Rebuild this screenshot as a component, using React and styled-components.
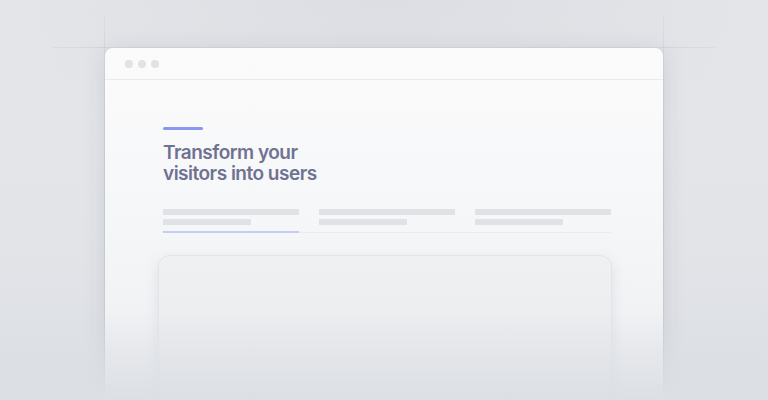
import React from 'react';
import styled, { createGlobalStyle } from 'styled-components';

const GlobalStyle = createGlobalStyle`
    html, body {
        margin: 0;
        padding: 0;
        background: #e2e4e9;
    }
    body {
        font-family: Inter, "Noto Sans", sans-serif;
    }
`;

const Stage = styled.div`
    position: relative;
    width: 768px;
    height: 400px;
    overflow: hidden;
    background: radial-gradient(ellipse 420px 160px at 384px 0px, #dcdee3 0%, rgba(220,222,227,0) 100%),
        linear-gradient(180deg, #e4e6ea 0%, #e2e4e8 60%, #dcdfe4 100%);
    padding-top: 48px;
    box-sizing: border-box;
`;

const GuideV = styled.div`
    position: absolute;
    top: 17px;
    bottom: 0;
    left: ${p => p.x}px;
    width: 1px;
    background: linear-gradient(180deg, rgba(190,193,200,0.2) 0%, rgba(190,193,200,0.9) 40%, rgba(190,193,200,0.6) 100%);
`;

const GuideH = styled.div`
    position: absolute;
    top: 47px;
    left: 52px;
    width: 664px;
    height: 1px;
    background: linear-gradient(90deg, rgba(200,203,209,0.3) 0%, #d0d2d8 12%, #d0d2d8 88%, rgba(200,203,209,0.3) 100%);
`;

const Window = styled.div`
    position: relative;
    margin-left: 105px;
    width: 558px;
    height: 400px;
    border-radius: 8px 8px 0 0;
    background: linear-gradient(180deg, #fbfbfc 0%, #f6f7f8 40%, #eceef1 90%);
    box-shadow: 0 0 0 1px rgba(210,212,218,0.5), 0 4px 22px rgba(120,125,140,0.22);
`;

const TitleBar = styled.div`
    display: flex;
    align-items: center;
    gap: 5px;
    height: 31px;
    padding-left: 20px;
    border-bottom: 1px solid #eaebee;
`;

const Dot = styled.span`
    width: 8px;
    height: 8px;
    border-radius: 50%;
    background: #e1e2e6;
`;

const Content = styled.div`
    padding: 47px 52px 0 58px;
`;

const Accent = styled.div`
    width: 40px;
    height: 3px;
    border-radius: 2px;
    background: #8a96ef;
`;

const Title = styled.h1`
    margin: 12px 0 0;
    font-size: 19px;
    line-height: 21px;
    font-weight: 600;
    letter-spacing: -0.5px;
    color: #707292;
`;

const TitleLine = styled.span`
    display: block;
`;

const Tabs = styled.div`
    display: grid;
    grid-template-columns: repeat(3, 136px);
    column-gap: 20px;
    margin-top: 25px;
    border-bottom: 1px solid #eaebee;
    width: 448px;
`;

const Tab = styled.div`
    display: flex;
    flex-direction: column;
    gap: 4px;
    padding-bottom: 6px;
    margin-bottom: -1px;
    border-bottom: 2px solid ${p => (p.active ? '#c6ccf3' : 'transparent')};
`;

const Line = styled.div`
    height: 6px;
    width: ${p => p.w}px;
    background: #e1e2e6;
`;

const Card = styled.div`
    margin: 22px 0 0 -5px;
    width: 452px;
    height: 200px;
    border-radius: 12px;
    border: 1px solid #e2e4e8;
    background: linear-gradient(180deg, #eff0f2 0%, #e6e8eb 100%);
    box-shadow: 0 4px 14px rgba(140,145,160,0.18);
`;

const Fade = styled.div`
    position: absolute;
    left: 0;
    right: 0;
    bottom: 0;
    height: 90px;
    background: linear-gradient(180deg, rgba(220,223,228,0) 0%, rgba(220,223,228,0.7) 70%, #dcdfe4 100%);
    pointer-events: none;
`;

const tabs = [true, false, false];

export default function App() {
    return (
        <>
            <GlobalStyle />
            <Stage>
                <GuideV x={104} />
                <GuideV x={663} />
                <GuideH />
                <Window>
                    <TitleBar>
                        <Dot />
                        <Dot />
                        <Dot />
                    </TitleBar>
                    <Content>
                        <Accent />
                        <Title>
                            <TitleLine>Transform your</TitleLine>
                            <TitleLine>visitors into users</TitleLine>
                        </Title>
                        <Tabs>
                            {tabs.map((active, i) => (
                                <Tab key={i} active={active}>
                                    <Line w={136} />
                                    <Line w={88} />
                                </Tab>
                            ))}
                        </Tabs>
                        <Card />
                    </Content>
                </Window>
                <Fade />
            </Stage>
        </>
    );
}
